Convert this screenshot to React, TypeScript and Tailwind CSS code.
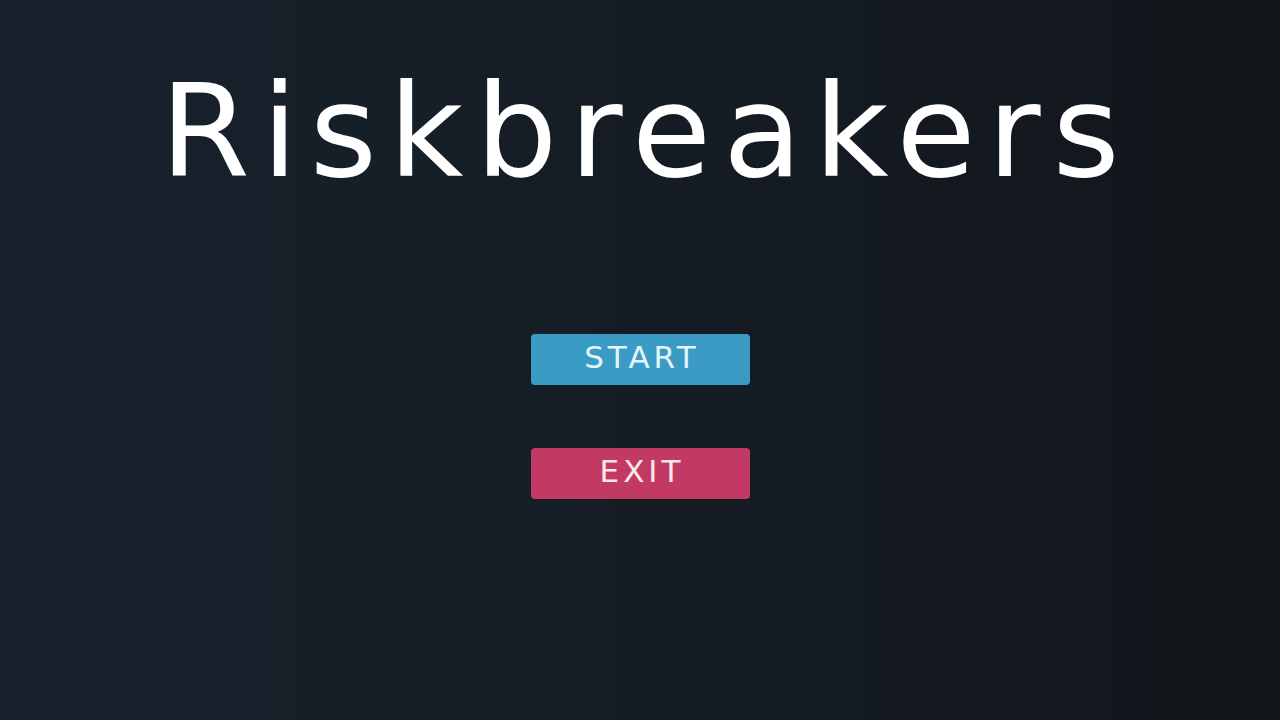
const App = () => {
  return (
    <div className="w-full h-screen flex flex-col items-center bg-gradient-to-r from-[#18222d] via-[#151c24] to-[#12161b] overflow-hidden">
      {/* title */}
      <h1 className="mt-[56px] text-[129px] leading-[150px] font-normal tracking-[12px] pl-[12px] text-white font-['DejaVu_Sans',sans-serif]">
        Riskbreakers
      </h1>

      {/* menu buttons */}
      <div className="mt-[128px] flex flex-col gap-[63px]">
        <button className="w-[219px] h-[51px] pb-[4px] rounded-[4px] bg-[#3a9bc5] text-[#e3f5fb] text-[31px] font-normal tracking-[4px] pl-[4px] font-['DejaVu_Sans',sans-serif]">
          START
        </button>
        <button className="w-[219px] h-[51px] pb-[4px] rounded-[4px] bg-[#c23a63] text-[#fbe6ec] text-[31px] font-normal tracking-[4px] pl-[4px] font-['DejaVu_Sans',sans-serif]">
          EXIT
        </button>
      </div>
    </div>
  );
};

export default App;
